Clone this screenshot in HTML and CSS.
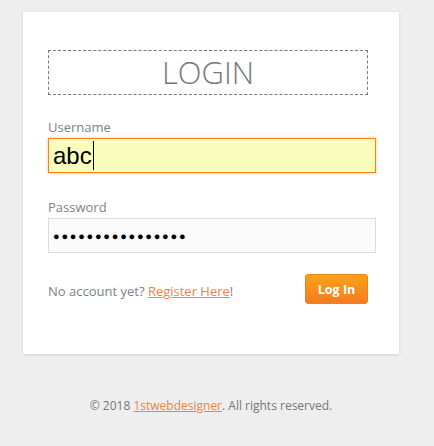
FILE: index.html
```html
<!DOCTYPE html>
<html>
<head>
<meta charset="utf-8">
<link rel="stylesheet" href="styles.css">
</head>
<body>
<div class="page">
  <form class="card">
    <h1 class="title">LOGIN</h1>
    <label class="label">Username</label>
    <div class="input focus"><span class="val">abc</span><span class="caret"></span></div>
    <label class="label pw">Password</label>
    <div class="input"><span class="dots">&#9679;&#9679;&#9679;&#9679;&#9679;&#9679;&#9679;&#9679;&#9679;&#9679;&#9679;&#9679;&#9679;&#9679;&#9679;&#9679;</span></div>
    <div class="actions">
      <p class="note">No account yet? <a href="#" class="link">Register Here</a>!</p>
      <button type="button" class="btn">Log In</button>
    </div>
  </form>
  <p class="footer">© 2018 <a href="#" class="link">1stwebdesigner</a>. All rights reserved.</p>
</div>
</body>
</html>
```
FILE: styles.css
```css
html, body {
  margin: 0;
  padding: 0;
  background: #eeeeee;
  font-family: "Open Sans", sans-serif;
}
.page {
  padding: 12px 35px 0 23px;
}
.card {
  background: #fff;
  width: 376px;
  height: 342px;
  box-sizing: border-box;
  padding: 38px 23px 0 25px;
  box-shadow: 0 1px 3px rgba(0,0,0,0.12);
  display: flex;
  flex-direction: column;
}
.title {
  margin: 0 0 23px 0;
  width: 320px;
  height: 45px;
  box-sizing: border-box;
  border: 1px dashed #777;
  font-weight: 300;
  font-size: 31px;
  color: #777;
  text-align: center;
  line-height: 43px;
}
.label {
  font-size: 13px;
  color: #7a828c;
  line-height: 18px;
  height: 20px;
}
.label.pw {
  margin-top: 25px;
}
.input {
  height: 35px;
  box-sizing: border-box;
  border: 1px solid #dddddd;
  background: #fafafa;
  display: flex;
  align-items: center;
  padding-left: 4px;
}
.input.focus {
  border-color: #f7821e;
  background: #f9fcbb;
  box-shadow: 0 0 3px rgba(247,130,30,0.5);
}
.val {
  font-family: "Liberation Sans", Arial, sans-serif;
  font-size: 24px;
  color: #000;
  line-height: 29px;
}
.caret {
  width: 1px;
  height: 29px;
  background: #000;
  margin-left: 1px;
}
.dots {
  font-family: "Liberation Sans", Arial, sans-serif;
  font-size: 11px;
  letter-spacing: 1.75px;
  color: #000;
}
.actions {
  margin-top: 21px;
  display: flex;
  justify-content: space-between;
  align-items: center;
  padding-right: 8px;
}
.note {
  margin: 4px 0 0 0;
  font-size: 13px;
  color: #7a828c;
}
.link {
  color: #f4823c;
  text-decoration: underline;
}
.btn {
  width: 63px;
  height: 30px;
  border: 1px solid #e8841a;
  border-radius: 3px;
  background: linear-gradient(#faa21b, #f47b20);
  color: #fff;
  font-family: "Open Sans", sans-serif;
  font-weight: 700;
  font-size: 12.5px;
  padding: 0;
}
.footer {
  margin: 43px 0 0 0;
  width: 376px;
  text-align: center;
  font-size: 12px;
  color: #777;
}
```
